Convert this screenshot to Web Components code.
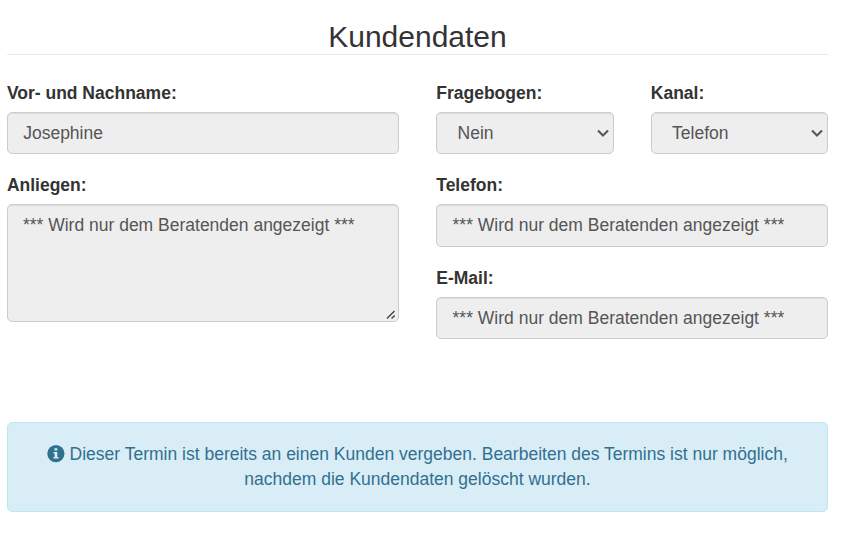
<!DOCTYPE html>
<html lang="de">
<head>
<meta charset="utf-8">
<title>Kundendaten</title>
<style>
body { margin: 0; background: #fff; color: #333; font: 17.5px/25px "Liberation Sans", Arial, sans-serif; }
form-stack form-columns { --column-gap: 37.2px; }
</style>
</head>
<body>
<customer-page>
  <section-title>Kundendaten</section-title>
  <form-columns>
    <form-stack>
      <form-field label="Vor- und Nachname:">Josephine</form-field>
      <form-field label="Anliegen:" kind="area">*** Wird nur dem Beratenden angezeigt ***</form-field>
    </form-stack>
    <form-stack>
      <form-columns>
        <form-field label="Fragebogen:" kind="select">Nein</form-field>
        <form-field label="Kanal:" kind="select">Telefon</form-field>
      </form-columns>
      <form-field label="Telefon:">*** Wird nur dem Beratenden angezeigt ***</form-field>
      <form-field label="E-Mail:">*** Wird nur dem Beratenden angezeigt ***</form-field>
    </form-stack>
  </form-columns>
  <info-alert>Dieser Termin ist bereits an einen Kunden vergeben. Bearbeiten des Termins ist nur möglich, nachdem die Kundendaten gelöscht wurden.</info-alert>
</customer-page>
<script>
function define(name, markup, setup) {
  customElements.define(name, class extends HTMLElement {
    constructor() {
      super();
      const t = document.createElement('template');
      t.innerHTML = markup;
      this.attachShadow({ mode: 'open' }).append(t.content.cloneNode(true));
    }
    connectedCallback() { if (setup) setup(this, this.shadowRoot); }
  });
}

define('customer-page', `
<style>:host { display: flex; flex-direction: column; width: 821.25px; padding: 20px 0 0 6.875px; }</style>
<slot></slot>`);

define('section-title', `
<style>
:host { display: block; border-bottom: 1px solid #eaeaea; margin-bottom: 25.625px; }
h2 { margin: 0; font-size: 30px; font-weight: 400; line-height: 34px; text-align: center; }
</style>
<h2><slot></slot></h2>`);

define('form-columns', `
<style>:host { display: grid; grid-template-columns: 1fr 1fr; column-gap: var(--column-gap, 37.5px); align-items: start; }</style>
<slot></slot>`);

define('form-stack', `
<style>:host { display: flex; flex-direction: column; gap: 18.75px; min-width: 0; }</style>
<slot></slot>`);

define('form-field', `
<style>
:host { display: block; min-width: 0; }
label { display: block; margin-bottom: 6.25px; font-weight: 700; }
.control {
  box-sizing: border-box; height: 42.5px; padding: 7.7px 15.3px; display: flex; justify-content: space-between;
  border: 1px solid #ccc; border-radius: 5px; background: #eee; color: #555;
  box-shadow: inset 0 1px 1px rgba(0,0,0,.075); white-space: nowrap;
}
svg { display: none; flex: none; }
:host([kind="area"]) .control { height: 117.5px; padding: 7.7px 2px 1px 15px; }
:host([kind="area"]) .grip { display: block; align-self: flex-end; }
:host([kind="select"]) .control { padding: 7.7px 3px 7.7px 20.3px; }
:host([kind="select"]) .arrow { display: block; align-self: center; }
</style>
<label></label>
<div class="control"><span><slot></slot></span>
  <svg class="arrow" width="14" height="10" viewBox="0 0 14 10" fill="none" stroke="#555" stroke-width="2.1"><path d="M2 2.5 7 7.5 12 2.5"/></svg>
  <svg class="grip" width="10" height="10" viewBox="0 0 10 10" fill="none" stroke="#444" stroke-width="1.4"><path d="M1 8.6 8.5 1.1M5.5 8.6 8.7 5.4"/></svg>
</div>`, (host, root) => { root.querySelector('label').textContent = host.getAttribute('label'); });

define('info-alert', `
<style>
:host { display: block; box-sizing: border-box; height: 90px; margin-top: 82.5px; padding: 18.75px; border: 1px solid #bce8f1;
  border-radius: 5px; background: #d9edf7; color: #31708f; text-align: center; }
svg { display: inline-block; vertical-align: -2.7px; overflow: visible; }
</style>
<svg width="17.5" height="17.5" viewBox="0 0 17.5 17.5"><circle cx="8.9" cy="8.6" r="8.6" fill="#31708f"/><path fill="#d9edf7" d="M7.5 3.2h2.8v2.3H7.5zM6.5 6.9h3.8v5h1.2v1.7H6.4v-1.7h1.2V8.5H6.5z"/></svg>
<slot></slot>`);
</script>
</body>
</html>
